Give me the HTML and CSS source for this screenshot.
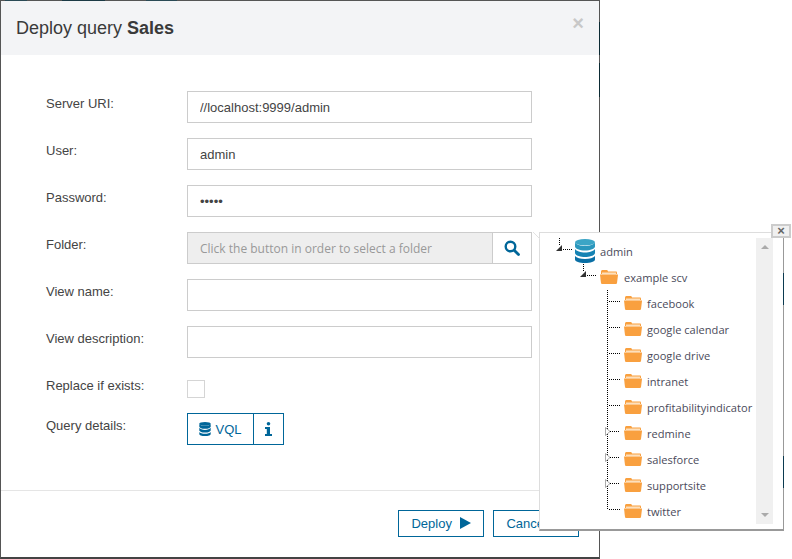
FILE: index.html
```html
<!DOCTYPE html>
<html lang="en">
<head>
<meta charset="utf-8">
<title>Deploy query</title>
<link rel="stylesheet" href="styles.css">
</head>
<body>
<svg class="defs" width="0" height="0">
    <symbol id="db" viewBox="0 0 20 24">
        <path fill="#0a6fa5" d="M0 17v3.500C0 22.500 4.500 24 10 24s10-1.500 10-3.500V17c-1.500 2-5.500 3-10 3S1.500 19 0 17z"/>
        <path fill="#1683b3" d="M0 10v4c0 2 4.500 4 10 4s10-2 10-4v-4c-1.500 2-5.500 3.500-10 3.500S1.500 12 0 10z"/>
        <path fill="#2a97bd" d="M0 3.500v4C0 9.500 4.500 11.500 10 11.500s10-2 10-4v-4C18.500 5.500 14.500 7 10 7S1.500 5.500 0 3.500z"/>
        <ellipse fill="#3ba5c6" cx="10" cy="3.200" rx="10" ry="3.200"/>
    </symbol>
    <symbol id="db-flat" viewBox="0 0 20 24">
        <path fill="#006699" d="M0 17v3.500C0 22.500 4.500 24 10 24s10-1.500 10-3.500V17c-1.500 2-5.500 3-10 3S1.500 19 0 17z"/>
        <path fill="#006699" d="M0 10v4c0 2 4.500 4 10 4s10-2 10-4v-4c-1.500 2-5.500 3.500-10 3.500S1.500 12 0 10z"/>
        <path fill="#006699" d="M0 3.500v4C0 9.500 4.500 11.500 10 11.500s10-2 10-4v-4C18.500 5.500 14.500 7 10 7S1.500 5.500 0 3.500z"/>
        <ellipse fill="#006699" cx="10" cy="3.200" rx="10" ry="3.200"/>
    </symbol>
    <symbol id="folder" viewBox="0 0 18 14">
        <path fill="#f9a03f" d="M1 1.500C1 .7 1.700 0 2.500 0h4C7.300 0 8 .7 8 1.500h8c.8 0 1 .7 1 1.500v1H1z"/>
        <path fill="#fde0bd" d="M2 2.500h14v2H2z"/>
        <path fill="#f9a03f" d="M0 4.500h18v.5L17 13c-.1.600-.5 1-1 1H2c-.5 0-.9-.4-1-1z"/>
    </symbol>
    <symbol id="tri-open" viewBox="0 0 23 26">
        <path fill="#333" d="M3 13l6-6v6z"/>
    </symbol>
    <symbol id="tri-closed" viewBox="0 0 23 26">
        <path fill="#fff" stroke="#aaa" d="M4.500 7.500l4.500 4-4.500 4z"/>
    </symbol>
</svg>

<div class="dialog">
    <i class="edge-top"></i>
    <div class="dialog-head">
        <h4 class="dialog-title">Deploy query <b>Sales</b></h4>
        <span class="dialog-close">×</span>
    </div>
    <form class="dialog-body">
        <label class="field-label">Server URI:</label>
        <input class="field-input" type="text" value="//localhost:9999/admin">
        <label class="field-label">User:</label>
        <input class="field-input" type="text" value="admin">
        <label class="field-label">Password:</label>
        <input class="field-input" type="password" value="admin">
        <label class="field-label">Folder:</label>
        <div class="field-group">
            <input class="field-input field-disabled" type="text" disabled placeholder="Click the button in order to select a folder">
            <span class="field-addon">
                <svg width="16" height="16" viewBox="0 0 16 16"><circle cx="6.500" cy="6.500" r="4.800" fill="none" stroke="#006699" stroke-width="2.400"/><path d="M10.200 10.200l4.300 4.300" stroke="#006699" stroke-width="2.800" stroke-linecap="round"/></svg>
            </span>
        </div>
        <label class="field-label">View name:</label>
        <input class="field-input" type="text">
        <label class="field-label">View description:</label>
        <input class="field-input" type="text">
        <label class="field-label">Replace if exists:</label>
        <div class="check-cell"><span class="check-box"></span></div>
        <label class="field-label">Query details:</label>
        <div class="btn-pair">
            <span class="btn-left">
                <svg class="vql-icon" width="12" height="14" viewBox="0 0 20 24"><use href="#db-flat"/></svg>VQL
            </span>
            <span class="btn-right">
                <svg width="7" height="14" viewBox="0 0 7 14"><circle cx="3.500" cy="1.800" r="1.800" fill="#006699"/><path fill="#006699" d="M0 5h5v7h2v2H0v-2h1.800V7H0z"/></svg>
            </span>
        </div>
    </form>
    <div class="dialog-foot">
        <button class="btn" type="button">Deploy <svg class="play" width="11" height="12" viewBox="0 0 11 12"><path fill="#006699" d="M0 0l11 6-11 6z"/></svg></button>
        <button class="btn" type="button">Cancel <svg class="play" width="11" height="12" viewBox="0 0 11 12"><path stroke="#006699" stroke-width="2" d="M1 1l9 10M10 1l-9 10"/></svg></button>
    </div>
    <i class="edge-mark"></i>
</div>

<div class="tree-popup">
    <svg class="popup-notch" width="7" height="7"><path d="M0 0l7 7" stroke="#e2e2e2" fill="none"/></svg>
    <ul class="tree">
        <li class="tree-row root">
            <svg class="conn" width="22" height="26"><path class="dots" d="M6.500 0v7M10 11.500h10"/><use href="#tri-open" width="23" height="26"/></svg>
            <svg class="db-icon" width="20" height="24"><use href="#db"/></svg>
            <span class="tree-text">admin</span>
        </li>
        <li class="tree-row lvl1">
            <svg class="conn" width="23" height="26"><path class="dots" d="M6.500 0v7M10 11.500h10"/><use href="#tri-open" width="23" height="26"/></svg>
            <svg class="folder" width="18" height="14"><use href="#folder"/></svg>
            <span class="tree-text">example scv</span>
        </li>
        <li class="tree-row lvl2">
            <svg class="conn" width="23" height="26"><path class="dots" d="M6.500 0v26M8 11.500h11"/></svg>
            <svg class="folder" width="18" height="14"><use href="#folder"/></svg>
            <span class="tree-text">facebook</span>
        </li>
        <li class="tree-row lvl2">
            <svg class="conn" width="23" height="26"><path class="dots" d="M6.500 0v26M8 11.500h11"/></svg>
            <svg class="folder" width="18" height="14"><use href="#folder"/></svg>
            <span class="tree-text">google calendar</span>
        </li>
        <li class="tree-row lvl2">
            <svg class="conn" width="23" height="26"><path class="dots" d="M6.500 0v26M8 11.500h11"/></svg>
            <svg class="folder" width="18" height="14"><use href="#folder"/></svg>
            <span class="tree-text">google drive</span>
        </li>
        <li class="tree-row lvl2">
            <svg class="conn" width="23" height="26"><path class="dots" d="M6.500 0v26M8 11.500h11"/></svg>
            <svg class="folder" width="18" height="14"><use href="#folder"/></svg>
            <span class="tree-text">intranet</span>
        </li>
        <li class="tree-row lvl2">
            <svg class="conn" width="23" height="26"><path class="dots" d="M6.500 0v26M8 11.500h11"/></svg>
            <svg class="folder" width="18" height="14"><use href="#folder"/></svg>
            <span class="tree-text">profitabilityindicator</span>
        </li>
        <li class="tree-row lvl2">
            <svg class="conn" width="23" height="26"><path class="dots" d="M6.500 0v26M9 11.500h10"/><use href="#tri-closed" width="23" height="26"/></svg>
            <svg class="folder" width="18" height="14"><use href="#folder"/></svg>
            <span class="tree-text">redmine</span>
        </li>
        <li class="tree-row lvl2">
            <svg class="conn" width="23" height="26"><path class="dots" d="M6.500 0v26M9 11.500h10"/><use href="#tri-closed" width="23" height="26"/></svg>
            <svg class="folder" width="18" height="14"><use href="#folder"/></svg>
            <span class="tree-text">salesforce</span>
        </li>
        <li class="tree-row lvl2">
            <svg class="conn" width="23" height="26"><path class="dots" d="M6.500 0v26M9 11.500h10"/><use href="#tri-closed" width="23" height="26"/></svg>
            <svg class="folder" width="18" height="14"><use href="#folder"/></svg>
            <span class="tree-text">supportsite</span>
        </li>
        <li class="tree-row lvl2">
            <svg class="conn" width="23" height="26"><path class="dots" d="M6.500 0v12M8 11.500h11"/></svg>
            <svg class="folder" width="18" height="14"><use href="#folder"/></svg>
            <span class="tree-text">twitter</span>
        </li>
    </ul>
    <div class="tree-scroll">
        <span class="arrow-up"></span>
        <span class="arrow-down"></span>
    </div>
    <span class="popup-close">×</span>
    <i class="popup-edge"></i>
</div>
</body>
</html>
```

FILE: styles.css
```css
html, body {
    margin: 0;
    height: 559px;
    overflow: hidden;
    background-color: #fff;
    font-family: "Liberation Sans", Arial, sans-serif;
    color: #444;
}
.defs {
    position: absolute;
}
.dialog {
    position: relative;
    box-sizing: border-box;
    width: 600px;
    height: 559px;
    border: 1px solid #555;
    border-bottom: 2px solid #444;
    display: flex;
    flex-direction: column;
}
.edge-top {
    position: absolute;
    left: 4px;
    top: -1px;
    width: 172px;
    height: 1px;
    background: linear-gradient(90deg, #2a4a55 0, #2a4a55 13%, #555 13%, #555 33%, #1b3a45 33%, #1b3a45 58%, #555 58%, #555 82%, #2a4a55 82%, #2a4a55 100%);
}
.edge-mark {
    position: absolute;
    right: -1px;
    top: 21px;
    width: 1px;
    height: 75px;
    background: linear-gradient(#0b2a33 0, #0b2a33 44%, #555 44%, #555 55%, #0b2a33 55%, #0b2a33 100%);
}
.dialog-head {
    height: 54px;
    background-color: #f3f4f6;
    display: flex;
    justify-content: space-between;
    padding: 0 15px 0 15px;
}
.dialog-title {
    margin: 0;
    font-size: 18px;
    font-weight: normal;
    line-height: 54px;
    color: #3a3a3a;
}
.dialog-close {
    font-size: 20px;
    font-weight: bold;
    color: #c8c8c8;
    line-height: 44px;
}
.dialog-body {
    flex: 1;
    padding: 36px 0 0 45px;
    display: grid;
    grid-template-columns: 141px 345px;
    grid-auto-rows: min-content;
    row-gap: 15px;
}
.field-label {
    font-size: 13px;
    line-height: 16px;
    padding-top: 5px;
    color: #444;
}
.field-input {
    box-sizing: border-box;
    width: 100%;
    height: 32px;
    padding: 0 12px;
    border: 1px solid #ccc;
    border-radius: 0;
    outline: none;
    font-family: "Liberation Sans", Arial, sans-serif;
    font-size: 13px;
    color: #444;
    background-color: #fff;
}
.field-group {
    display: flex;
}
.field-disabled {
    flex: 1;
    padding-top: 1px;
    background-color: #eee;
    font-family: "Open Sans", sans-serif;
    font-size: 12px;
}
.field-disabled::placeholder {
    color: #999;
    opacity: 1;
}
.field-addon {
    box-sizing: border-box;
    width: 39px;
    height: 32px;
    border: 1px solid #ccc;
    border-left: none;
    display: flex;
    align-items: center;
    justify-content: center;
}
.check-cell {
    height: 25px;
    padding-top: 7px;
    box-sizing: border-box;
}
.check-box {
    display: block;
    box-sizing: border-box;
    width: 18px;
    height: 18px;
    border: 1px solid #d5d5d5;
}
.btn-pair {
    display: flex;
    width: 97px;
    height: 32px;
    box-sizing: border-box;
    border: 1px solid #006699;
    color: #006699;
    font-size: 13px;
}
.btn-left {
    flex: 1;
    display: flex;
    align-items: center;
    justify-content: center;
    border-right: 1px solid #006699;
}
.vql-icon {
    margin-right: 4px;
}
.btn-right {
    width: 29px;
    display: flex;
    align-items: center;
    justify-content: center;
}
.dialog-foot {
    height: 67px;
    border-top: 1px solid #e5e5e5;
    display: flex;
    justify-content: flex-end;
    gap: 9px;
    padding: 19px 20px 0 0;
    box-sizing: border-box;
}
.btn {
    width: 86px;
    height: 27px;
    padding: 0;
    border: 1px solid #006699;
    border-radius: 0;
    background-color: #fff;
    font-family: "Liberation Sans", Arial, sans-serif;
    font-size: 13px;
    color: #006699;
}
.play {
    margin-left: 4px;
    vertical-align: -1px;
}
.tree-popup {
    position: absolute;
    left: 539px;
    top: 232px;
    box-sizing: border-box;
    width: 245px;
    height: 299px;
    background-color: #fff;
    border: 1px solid #ddd;
    border-right: 1px solid #999;
    border-bottom: 2px solid #999;
    padding: 5px 10px 0 13px;
    display: flex;
    justify-content: space-between;
}
.popup-notch {
    position: absolute;
    left: -7px;
    top: -1px;
}
.popup-edge {
    position: absolute;
    right: -1px;
    top: 40px;
    width: 1px;
    height: 215px;
    background: linear-gradient(#0b3a50 0, #0b3a50 15%, #999 15%, #999 85%, #0b3a50 85%, #0b3a50 100%);
}
.tree {
    list-style: none;
    margin: 0;
    padding: 0;
    flex-shrink: 0;
}
.tree-row {
    height: 26px;
    display: flex;
    align-items: center;
    font-family: "Open Sans", sans-serif;
    font-size: 11.1px;
    color: #4a4a5a;
    white-space: nowrap;
}
.lvl1 {
    margin-left: 24px;
}
.lvl2 {
    margin-left: 48px;
}
.conn {
    flex-shrink: 0;
    overflow: visible;
}
.dots {
    fill: none;
    stroke: #000;
    stroke-width: 1;
    stroke-dasharray: 1 1;
}
.db-icon {
    flex-shrink: 0;
    margin-right: 5px;
}
.folder {
    flex-shrink: 0;
    margin-right: 6px;
}
.lvl2 .folder {
    margin-right: 5px;
}
.tree-scroll {
    flex-shrink: 0;
    width: 17px;
    height: 286px;
    background-color: #f0f0f0;
    display: flex;
    flex-direction: column;
    justify-content: space-between;
    align-items: center;
    padding: 7px 0;
    box-sizing: border-box;
}
.arrow-up, .arrow-down {
    width: 0;
    height: 0;
    border-left: 4px solid transparent;
    border-right: 4px solid transparent;
}
.arrow-up {
    border-bottom: 4px solid #aaa;
}
.arrow-down {
    border-top: 4px solid #aaa;
}
.popup-close {
    position: absolute;
    right: -8px;
    top: -9px;
    box-sizing: border-box;
    width: 20px;
    height: 14px;
    background-color: #f0f0f0;
    border: 2px solid #ccc;
    font-size: 13px;
    font-weight: bold;
    line-height: 9px;
    text-align: center;
    color: #666;
}
```
